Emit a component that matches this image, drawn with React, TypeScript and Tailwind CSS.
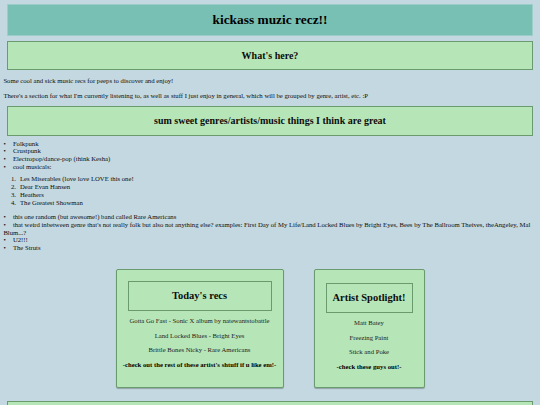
import React from 'react'

const genres = ['Folkpunk', 'Crustpunk', 'Electropop/dance-pop (think Kesha)', 'cool musicals:']
const musicals = ['Les Miserables (love love LOVE this one!', 'Dear Evan Hansen', 'Heathers', 'The Greatest Showman']
const more = [
  'this one random (but awesome!) band called Rare Americans',
  "that weird inbetween genre that's not really folk but also not anything else? examples: First Day of My Life/Land Locked Blues by Bright Eyes, Bees by The Ballroom Theives, theAngeley, Mal Blum...?",
  'U2!!!',
  'The Struts',
]

function Bullet({ text }: { text: string }) {
  return (
    <li>
      <span className="inline-block w-[9.5px]">•</span>
      {text}
    </li>
  )
}

function Banner({ children, className }: { children: React.ReactNode; className?: string }) {
  return (
    <div className={'mx-[3.6px] flex items-center justify-center border border-[#6a9b6e] bg-[#b6e6b8] ' + (className ?? '')}>
      <h2 className="text-[10px] font-bold">{children}</h2>
    </div>
  )
}

function Card({ title, items, footer, top, width }: { title: string; items: string[]; footer: string; top: string; width: string }) {
  return (
    <div className={'flex h-[119px] flex-col items-center rounded-[2px] border border-[#6a9b6e] bg-[#b6e6b8] px-[11px] shadow-[0_1px_1px_rgba(0,0,0,0.25)] ' + top + ' ' + width}>
      <div className="flex h-[29.5px] w-full items-center justify-center border border-[#6a9b6e]">
        <h2 className="text-[10.5px] font-bold">{title}</h2>
      </div>
      <div className="mt-[6.7px] flex flex-col gap-[6.7px] text-center text-[#1c1c1c]">
        {items.map(i => (
          <p key={i} className="whitespace-nowrap">{i}</p>
        ))}
        <p className="whitespace-nowrap font-bold text-black">{footer}</p>
      </div>
    </div>
  )
}

export default function App() {
  return (
    <div className="min-h-screen bg-[#c3d8e0] px-[3.4px] pt-[4px] font-['Liberation_Serif',serif] text-[6.7px] leading-[1.15] text-[#0d0d0d]">
      <div className="mx-[3.6px] flex h-[32px] items-center justify-center border border-[#9ccdc6] bg-[#79c0b4]">
        <h1 className="text-[13.4px] font-bold text-black">kickass muzic recz!!</h1>
      </div>

      <Banner className="mt-[5px] h-[29px]">What's here?</Banner>

      <p className="mt-[7.2px]">Some cool and sick music recs for peeps to discover and enjoy!</p>
      <p className="mt-[6.7px]">There's a section for what I'm currently listening to, as well as stuff I just enjoy in general, which will be grouped by genre, artist, etc. :P</p>

      <Banner className="mt-[6.3px] h-[30px]">sum sweet genres/artists/music things I think are great</Banner>

      <ul className="mt-[4px]">
        {genres.map(g => <Bullet key={g} text={g} />)}
      </ul>
      <ol className="mt-[5px] pl-[7.6px]">
        {musicals.map((m, i) => (
          <li key={m}>
            <span className="inline-block w-[9px]">{i + 1}.</span>
            {m}
          </li>
        ))}
      </ol>
      <ul className="mt-[7px]">
        {more.map(g => <Bullet key={g} text={g} />)}
      </ul>

      <div className="mt-[17.5px] flex justify-center gap-[30px]">
        <Card
          title="Today's recs"
          items={['Gotta Go Fast - Sonic X album by natewantstobattle', 'Land Locked Blues - Bright Eyes', 'Brittle Bones Nicky - Rare Americans']}
          footer="-check out the rest of these artist's shtuff if u like em!-"
          top="pt-[11px]"
          width="w-[168px]"
        />
        <Card
          title="Artist Spotlight!"
          items={['Matt Batey', 'Freezing Paint', 'Stick and Poke']}
          footer="-check these guys out!-"
          top="pt-[13px]"
          width="w-[111px]"
        />
      </div>

      <div className="mx-[3.6px] mt-[13px] h-[40px] border border-[#6a9b6e] bg-[#b6e6b8]" />
    </div>
  )
}
